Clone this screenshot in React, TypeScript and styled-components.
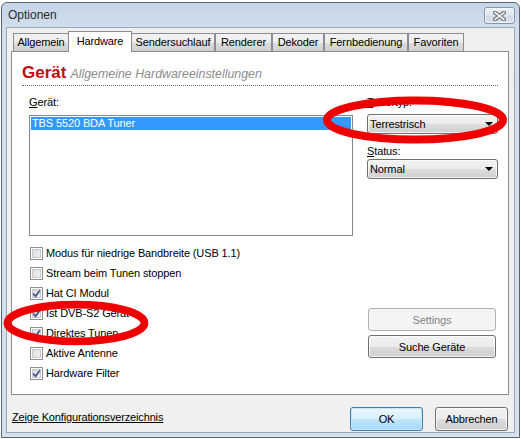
import React from "react";
import styled, { createGlobalStyle, css } from "styled-components";

const Global = createGlobalStyle`
  *, *::before, *::after { box-sizing: border-box; }
  html, body { margin: 0; padding: 0; background: #ffffff; }
  body {
    font-family: "Liberation Sans", Arial, sans-serif;
    font-size: 11px;
    letter-spacing: -0.12px;
    color: #000;
  }
`;

const Stage = styled.div`
  position: relative;
  width: 521px;
  height: 439px;
  overflow: hidden;
  padding: 2px 0 0 1px;
`;

const Window = styled.div`
  width: 519px;
  height: 436px;
  border: 1px solid #5a6673;
  border-radius: 6px 6px 0 0;
  background: linear-gradient(to bottom, #c4d5e8 0px, #d2deeb 26px, #d6e1ed 100%);
  display: flex;
  flex-direction: column;
  padding: 0 4px 4px 4px;
`;

const TitleBar = styled.div`
  height: 24px;
  display: flex;
  align-items: flex-start;
  justify-content: space-between;
`;

const Title = styled.div`
  font-size: 12px;
  line-height: 24px;
  padding-left: 2px;
  color: #2a2a2a;
  letter-spacing: 0;
`;

const CloseButton = styled.div`
  margin-top: 4px;
  width: 31px;
  height: 17px;
  border: 1px solid #8495ab;
  border-radius: 3px;
  background: linear-gradient(to bottom, #eef3f8, #dbe4ee 50%, #cfdae6 51%, #d8e2ed);
  box-shadow: inset 0 0 0 1px rgba(255, 255, 255, 0.6);
  display: flex;
  align-items: center;
  justify-content: center;
`;

const Client = styled.div`
  flex: 1;
  border: 1px solid #9aa7b6;
  background: #f0f0f0;
  padding: 0 5px 0 4px;
  display: flex;
  flex-direction: column;
`;

const TabStrip = styled.div`
  height: 24px;
  display: flex;
  align-items: flex-end;
  padding-left: 2px;
  margin-bottom: -1px;
  position: relative;
  z-index: 1;
`;

const Tab = styled.div<{ $w: number; $active?: boolean }>`
  width: ${(p) => p.$w}px;
  height: 18px;
  margin-bottom: 1px;
  border: 1px solid #898c95;
  border-bottom: none;
  background: linear-gradient(to bottom, #f3f3f3, #ebebeb 50%, #dddddd 51%, #cfcfcf);
  display: flex;
  align-items: center;
  justify-content: center;
  padding-bottom: 1px;
  white-space: nowrap;
  ${(p) =>
    p.$active &&
    css`
      height: 21px;
      margin: 0 -1px 0 -1px;
      background: #ffffff;
      padding-bottom: 3px;
      position: relative;
      z-index: 2;
    `}
`;

const Panel = styled.div`
  width: 498px;
  height: 344px;
  border: 1px solid #898c95;
  background: #ffffff;
  display: flex;
  flex-direction: column;
`;

const Header = styled.div`
  margin: 11px 10px 0 10px;
  height: 20px;
  display: flex;
  align-items: baseline;
  gap: 4px;
  line-height: 20px;
`;

const HeaderTitle = styled.span`
  font-size: 17px;
  font-weight: bold;
  color: #be0c12;
  letter-spacing: 0;
`;

const HeaderSub = styled.span`
  font-size: 12.4px;
  font-style: italic;
  color: #8c8c8c;
  letter-spacing: 0;
`;

const Rule = styled.div`
  margin: 2px 10px 0 10px;
  border-top: 1px dotted #6a6a6a;
`;

const Row = styled.div<{ $top: number }>`
  display: flex;
  padding-left: 17px;
  margin-top: ${(p) => p.$top}px;
`;

const Column = styled.div<{ $w: number; $ml?: number; $pt?: number; $gap?: number }>`
  width: ${(p) => p.$w}px;
  margin-left: ${(p) => p.$ml ?? 0}px;
  padding-top: ${(p) => p.$pt ?? 0}px;
  display: flex;
  flex-direction: column;
  gap: ${(p) => p.$gap ?? 0}px;
`;

const FieldLabel = styled.div<{ $mt?: number; $mb?: number }>`
  line-height: 14px;
  height: 14px;
  margin-top: ${(p) => p.$mt ?? 0}px;
  margin-bottom: ${(p) => p.$mb ?? 6}px;
  u { text-decoration: underline; }
`;

const ListBox = styled.div`
  height: 121px;
  border: 1px solid #828790;
  background: #fff;
  padding: 1px;
`;

const ListItem = styled.div<{ $selected?: boolean }>`
  height: 13px;
  line-height: 13px;
  padding-left: 1px;
  ${(p) =>
    p.$selected &&
    css`
      background: #3399ff;
      color: #ffffff;
    `}
`;

const Combo = styled.div`
  height: 20px;
  border: 1px solid #707070;
  border-radius: 3px;
  background: linear-gradient(to bottom, #f2f2f2, #ebebeb 50%, #dddddd 51%, #cfcfcf);
  box-shadow: inset 0 0 0 1px rgba(255, 255, 255, 0.7);
  display: flex;
  align-items: center;
  justify-content: space-between;
  padding: 0 4px 0 2px;
`;

const Arrow = styled.span`
  width: 0;
  height: 0;
  border-left: 4px solid transparent;
  border-right: 4px solid transparent;
  border-top: 4px solid #000;
`;

const CheckRow = styled.div`
  height: 20px;
  display: flex;
  align-items: center;
  gap: 3px;
  padding-left: 1px;
  line-height: 20px;
`;

const Box = styled.span`
  width: 13px;
  height: 13px;
  flex: none;
  border: 1px solid #8e8f8f;
  background: linear-gradient(135deg, #d4d6da, #f7f7f7);
  box-shadow: inset 0 0 0 1px #ffffff, inset 0 0 0 2px #c6c9cd;
  display: flex;
  align-items: center;
  justify-content: center;
`;

const Button = styled.div<{ $h?: number; $w?: number; $variant?: "default" | "disabled" | "focus" }>`
  height: ${(p) => p.$h ?? 23}px;
  width: ${(p) => (p.$w ? `${p.$w}px` : "100%")};
  border: 1px solid #707070;
  border-radius: 3px;
  background: linear-gradient(to bottom, #f2f2f2, #ebebeb 50%, #dddddd 51%, #cfcfcf);
  box-shadow: inset 0 0 0 1px rgba(255, 255, 255, 0.75);
  display: flex;
  align-items: center;
  justify-content: center;
  ${(p) =>
    p.$variant === "disabled" &&
    css`
      border-color: #adb2b5;
      background: #f4f4f4;
      color: #838383;
      box-shadow: none;
    `}
  ${(p) =>
    p.$variant === "focus" &&
    css`
      border-color: #3c7fb1;
      background: linear-gradient(to bottom, #eaf6fd, #d9f0fc 50%, #bee6fd 51%, #a7d9f5);
      box-shadow: inset 0 0 0 1px #c4e8fb;
    `}
`;

const Footer = styled.div`
  display: flex;
  align-items: flex-start;
  padding: 12px 1px 0 1px;
`;

const Link = styled.span`
  line-height: 14px;
  margin-top: 3px;
  text-decoration: underline;
  color: #000;
  letter-spacing: -0.15px;
  margin-right: auto;
`;

const FooterButtons = styled.div`
  display: flex;
  gap: 12px;
`;

const Overlay = styled.svg`
  position: absolute;
  top: 0;
  left: 0;
  pointer-events: none;
`;

const Check = () => (
  <svg width="9" height="9" viewBox="0 0 9 9">
    <path d="M1.2 4.6 L3.6 7.3 L7.9 1.2" fill="none" stroke="#44598f" strokeWidth="1.7" />
  </svg>
);

const tabs = [
  { label: "Allgemein", w: 56 },
  { label: "Hardware", w: 64, active: true },
  { label: "Sendersuchlauf", w: 84 },
  { label: "Renderer", w: 57 },
  { label: "Dekoder", w: 52 },
  { label: "Fernbedienung", w: 84 },
  { label: "Favoriten", w: 56 },
];

const checks = [
  { label: "Modus für niedrige Bandbreite (USB 1.1)", on: false },
  { label: "Stream beim Tunen stoppen", on: false },
  { label: "Hat CI Modul", on: true },
  { label: "Ist DVB-S2 Gerät", on: true },
  { label: "Direktes Tunen", on: true },
  { label: "Aktive Antenne", on: false },
  { label: "Hardware Filter", on: true },
];

export default function App() {
  return (
    <Stage>
      <Global />
      <Window>
        <TitleBar>
          <Title>Optionen</Title>
          <CloseButton>
            <svg width="13" height="10" viewBox="0 0 13 10">
              <path d="M2 1.5 L11 8.5 M11 1.5 L2 8.5" stroke="#6c6f74" strokeWidth="4" strokeLinecap="square" />
              <path d="M2 1.5 L11 8.5 M11 1.5 L2 8.5" stroke="#f4f6f8" strokeWidth="1.6" strokeLinecap="square" />
            </svg>
          </CloseButton>
        </TitleBar>
        <Client>
          <TabStrip>
            {tabs.map((t) => (
              <Tab key={t.label} $w={t.w} $active={t.active}>
                {t.label}
              </Tab>
            ))}
          </TabStrip>
          <Panel>
            <Header>
              <HeaderTitle>Gerät</HeaderTitle>
              <HeaderSub>Allgemeine Hardwareeinstellungen</HeaderSub>
            </Header>
            <Rule />
            <Row $top={9}>
              <Column $w={324}>
                <FieldLabel>
                  <u>G</u>erät:
                </FieldLabel>
                <ListBox>
                  <ListItem $selected>TBS 5520 BDA Tuner</ListItem>
                </ListBox>
              </Column>
              <Column $w={131} $ml={14}>
                <FieldLabel $mb={5}>
                  <u>T</u>unertyp:
                </FieldLabel>
                <Combo>
                  <span>Terrestrisch</span>
                  <Arrow />
                </Combo>
                <FieldLabel $mt={10} $mb={1}>
                  <u>S</u>tatus:
                </FieldLabel>
                <Combo>
                  <span>Normal</span>
                  <Arrow />
                </Combo>
              </Column>
            </Row>
            <Row $top={7}>
              <Column $w={324}>
                {checks.map((c) => (
                  <CheckRow key={c.label}>
                    <Box>{c.on && <Check />}</Box>
                    <span>{c.label}</span>
                  </CheckRow>
                ))}
              </Column>
              <Column $w={128} $ml={15} $pt={65} $gap={4}>
                <Button $variant="disabled">Settings</Button>
                <Button>Suche Geräte</Button>
              </Column>
            </Row>
          </Panel>
          <Footer>
            <Link>Zeige Konfigurationsverzeichnis</Link>
            <FooterButtons>
              <Button $h={24} $w={73} $variant="focus">
                OK
              </Button>
              <Button $h={24} $w={73}>
                Abbrechen
              </Button>
            </FooterButtons>
          </Footer>
        </Client>
      </Window>
      <Overlay width="521" height="439" viewBox="0 0 521 439">
        <ellipse cx="415" cy="120" rx="88" ry="19.5" fill="none" stroke="#ee0000" strokeWidth="8" />
        <ellipse cx="76" cy="323" rx="68.5" ry="18.3" fill="none" stroke="#ee0000" strokeWidth="7.7" />
      </Overlay>
    </Stage>
  );
}
